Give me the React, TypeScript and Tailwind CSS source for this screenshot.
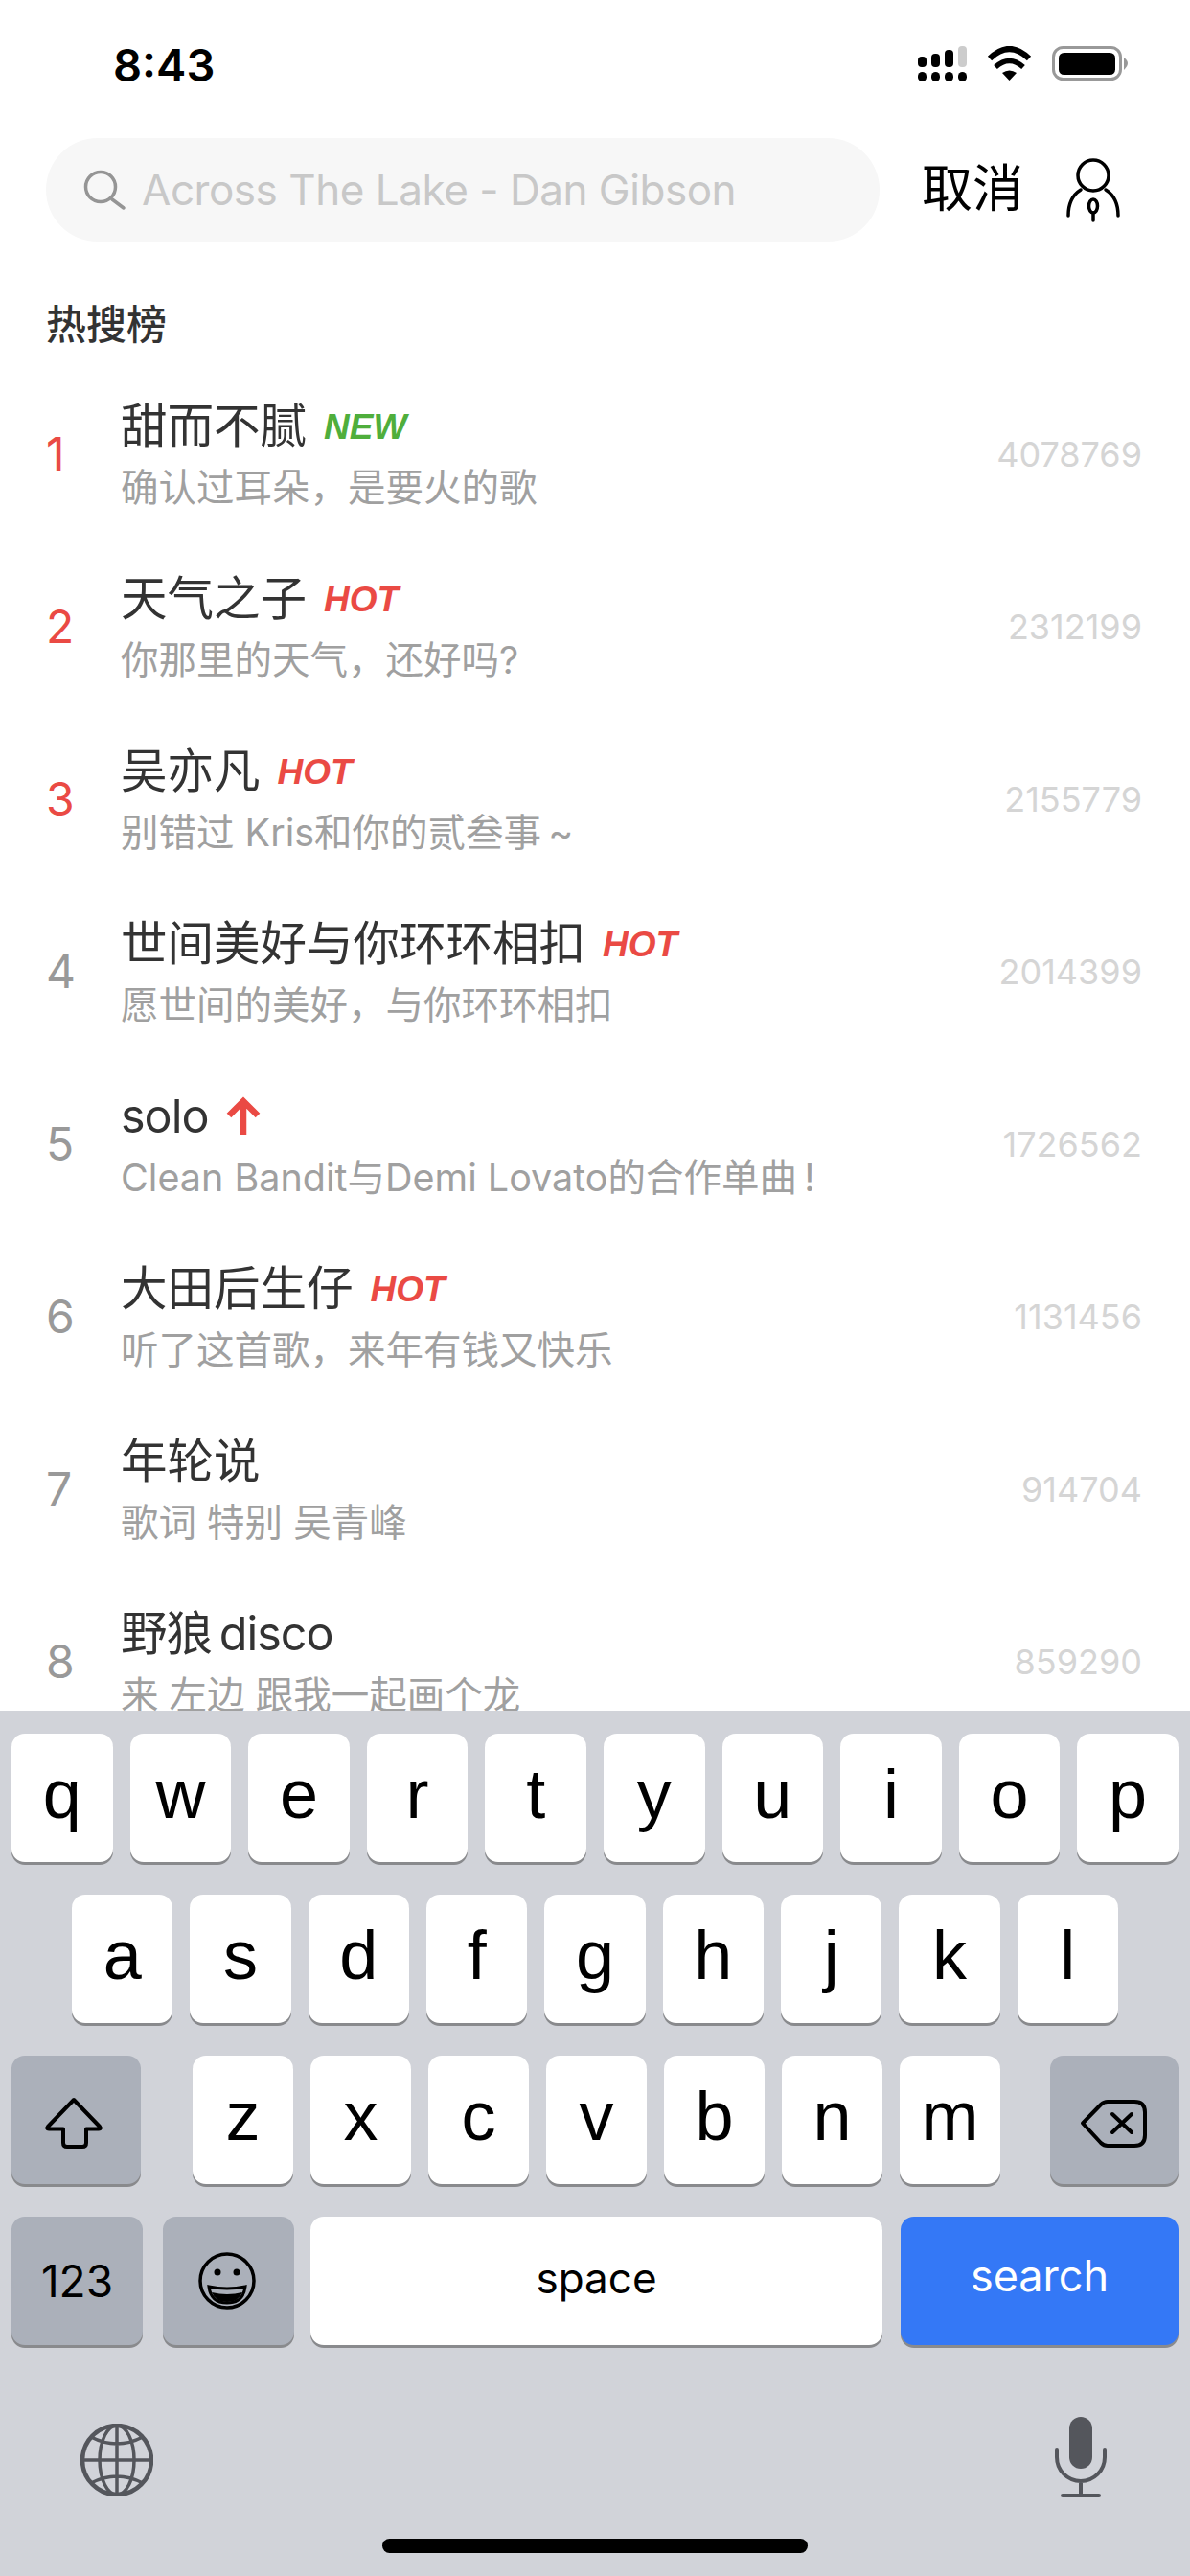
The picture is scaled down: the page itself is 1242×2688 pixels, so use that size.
import { ReactNode } from "react";

type Tag = "NEW" | "HOT" | "UP";

const rows: { name: string; tag?: Tag; desc: string; count: string; latin?: boolean }[] = [
	{ name: "甜而不腻", tag: "NEW", desc: "确认过耳朵，是要火的歌", count: "4078769" },
	{ name: "天气之子", tag: "HOT", desc: "你那里的天气，还好吗?", count: "2312199" },
	{ name: "吴亦凡", tag: "HOT", desc: "别错过 Kris和你的贰叁事\u2009~", count: "2155779" },
	{ name: "世间美好与你环环相扣", tag: "HOT", desc: "愿世间的美好，与你环环相扣", count: "2014399" },
	{ name: "solo", tag: "UP", desc: "Clean Bandit与Demi Lovato的合作单曲\u2009!", count: "1726562", latin: true },
	{ name: "大田后生仔", tag: "HOT", desc: "听了这首歌，来年有钱又快乐", count: "1131456" },
	{ name: "年轮说", desc: "歌词 特别 吴青峰", count: "914704" },
	{ name: "野狼\u2009disco", desc: "来 左边 跟我一起画个龙", count: "859290", latin: true },
];

function StatusIcons() {
	return (
		<div className="flex items-start">
			<svg width="52" height="38" viewBox="0 0 52 38">
				<rect x="0" y="11" width="9" height="11" rx="4" fill="#000" />
				<rect x="14" y="8" width="9" height="14" rx="4" fill="#000" />
				<rect x="28" y="4" width="9" height="18" rx="4" fill="#000" />
				<rect x="42" y="0" width="9" height="22" rx="4" fill="#cccccc" />
				<rect x="0" y="27" width="9" height="10" rx="4.5" fill="#000" />
				<rect x="14" y="27" width="9" height="10" rx="4.5" fill="#000" />
				<rect x="28" y="27" width="9" height="10" rx="4.5" fill="#000" />
				<rect x="42" y="27" width="9" height="10" rx="4.5" fill="#000" />
			</svg>
			<svg className="ml-[20px]" width="48" height="38" viewBox="0 0 48 38" fill="none">
				<path d="M3 13Q23.5 -7 44 13" stroke="#000" strokeWidth="6" />
				<path d="M9 22Q23.5 9 38 22" stroke="#000" strokeWidth="5.5" />
				<path d="M23.5 36L16 28Q23.5 23 31 28Z" fill="#000" />
			</svg>
			<svg className="ml-[20px]" width="80" height="38" viewBox="0 0 80 38" fill="none">
				<rect x="1.5" y="1.5" width="70" height="33" rx="10" stroke="#999" strokeWidth="3" />
				<rect x="7" y="7" width="59" height="23" rx="5.5" fill="#000" />
				<path d="M75 12Q79 15 79 18Q79 21 75 25Z" fill="#999" />
			</svg>
		</div>
	);
}

function Rank({ n }: { n: number }) {
	return (
		<div className={`w-[78px] shrink-0 text-[48px] leading-none ${n <= 3 ? "text-[#ea4a44]" : "text-[#999999]"}`}>
			{n}
		</div>
	);
}

function RowTag({ tag }: { tag: Tag }) {
	if (tag === "UP") {
		return (
			<svg width="36" height="42" viewBox="0 0 36 42" fill="none">
				<path d="M18 40V6M3 20L18 5L33 20" stroke="#ea4a44" strokeWidth="6.5" />
			</svg>
		);
	}
	return (
		<span
			className={`font-['Liberation_Sans'] text-[37px] font-bold italic leading-none ${tag === "NEW" ? "text-[#4fae3c]" : "text-[#ea4a44]"}`}
		>
			{tag}
		</span>
	);
}

function Key({ children, className }: { children: ReactNode; className?: string }) {
	return (
		<div
			className={`flex h-[134px] items-center justify-center rounded-[14px] text-black shadow-[0_3px_0_#898a8d] ${className ?? "flex-1 bg-white pb-[9px] font-['Liberation_Sans'] text-[72px]"}`}
		>
			{children}
		</div>
	);
}

function Keyboard() {
	return (
		<div className="flex h-[903px] shrink-0 flex-col bg-[#d1d3d9] pt-[24px]">
			<div className="flex gap-[18px] px-[12px]">
				{"qwertyuiop".split("").map((k) => (
					<Key key={k}>{k}</Key>
				))}
			</div>
			<div className="mt-[34px] flex gap-[18px] px-[75px]">
				{"asdfghjkl".split("").map((k) => (
					<Key key={k}>{k}</Key>
				))}
			</div>
			<div className="mt-[34px] flex items-start px-[12px]">
				<Key className="w-[135px] bg-[#abb0ba]">
					<svg className="ml-[3px]" width="90" height="80" viewBox="0 0 90 80" fill="none">
						<path
							d="M41 19L14 47Q12 49.5 15 49.5H30V64Q30 68 34 68H50Q54 68 54 64V49.5H67Q70 49.5 68 47Z"
							stroke="#000"
							strokeWidth="4"
							strokeLinejoin="round"
						/>
					</svg>
				</Key>
				<div className="ml-[54px] flex w-[843px] gap-[18px]">
					{"zxcvbnm".split("").map((k) => (
						<Key key={k}>{k}</Key>
					))}
				</div>
				<Key className="ml-[52px] w-[134px] bg-[#abb0ba]">
					<svg className="-ml-[6px]" width="100" height="80" viewBox="0 0 100 80" fill="none">
						<path
							d="M20 43.5L39 24Q42 21 46 21H74Q85 21 85 32V56Q85 67 74 67H46Q42 67 39 64Z"
							stroke="#000"
							strokeWidth="4"
							strokeLinejoin="round"
						/>
						<path d="M51 34L71 53M71 34L51 53" stroke="#000" strokeWidth="4" strokeLinecap="round" />
					</svg>
				</Key>
			</div>
			<div className="mt-[34px] flex items-start px-[12px]">
				<Key className="w-[137px] bg-[#abb0ba] text-[46px]">123</Key>
				<Key className="ml-[21px] w-[137px] bg-[#abb0ba]">
					<svg width="100" height="100" viewBox="0 0 100 100" fill="none">
						<circle cx="48" cy="50" r="28" stroke="#000" strokeWidth="3.5" />
						<circle cx="38" cy="41" r="3.5" fill="#000" />
						<circle cx="58" cy="41" r="3.5" fill="#000" />
						<path d="M29 56Q48 60 67 56Q65 73 48 73Q31 73 29 56Z" stroke="#000" strokeWidth="3" />
						<path d="M32 62Q48 66 64 62Q60 72 48 72Q36 72 32 62Z" fill="#000" />
					</svg>
				</Key>
				<Key className="ml-[17px] w-[597px] bg-white pb-[6px] text-[44px]">space</Key>
				<Key className="ml-[19px] w-[290px] bg-[#3478f6] pb-[10px] text-[45px] !text-white">search</Key>
			</div>
			<div className="mt-[73px] flex items-start justify-between px-[84px]">
				<svg className="mt-[9px]" width="76" height="76" viewBox="0 0 76 76" fill="none" stroke="#54565c" strokeWidth="3.5">
					<circle cx="38" cy="38" r="36" strokeWidth="4.5" />
					<ellipse cx="38" cy="38" rx="18" ry="36" />
					<path d="M38 2V74M2 38H74M11 14Q38 28 65 14M11 62Q38 48 65 62" />
				</svg>
				<svg width="60" height="90" viewBox="0 0 60 90" fill="none">
					<rect x="18" y="2" width="24" height="54" rx="12" fill="#54565c" />
					<path d="M5 36V44A25 25 0 0 0 55 44V36M30 69V84M11 84H49" stroke="#54565c" strokeWidth="4" strokeLinecap="round" />
				</svg>
			</div>
			<div className="mt-[39px] h-[15px] w-[444px] self-center rounded-full bg-black" />
		</div>
	);
}

export default function App() {
	return (
		<div
			lang="zh-CN"
			className="flex h-[2688px] w-[1242px] flex-col overflow-hidden bg-white font-['Inter','Noto_Sans_CJK_SC',sans-serif]"
		>
			<div className="flex h-[144px] shrink-0 items-start justify-between pl-[118px] pr-[64px] pt-[48px]">
				<span className="text-[47px] font-semibold leading-[40px] text-black">8:43</span>
				<StatusIcons />
			</div>

			<div className="flex h-[108px] shrink-0 items-center pl-[48px]">
				<div className="flex h-[108px] w-[870px] items-center rounded-full bg-[#f7f7f7] pl-[22px]">
					<svg className="-mt-[12px]" width="64" height="64" viewBox="0 0 64 64" fill="none">
						<circle cx="35" cy="35" r="15.5" stroke="#959595" strokeWidth="3.5" />
						<path d="M47 48L59 57" stroke="#959595" strokeWidth="3.5" strokeLinecap="round" />
					</svg>
					<span className="ml-[14px] text-[44px] tracking-[-0.47px] text-[#c8c8c8]">Across The Lake - Dan Gibson</span>
				</div>
				<span className="ml-[44px] text-[53px] text-black">取消</span>
				<svg className="-mt-[6px] ml-[23px]" width="100" height="90" viewBox="0 0 100 90" fill="none" stroke="#000" strokeWidth="3.5">
					<circle cx="50" cy="33" r="16" />
					<path d="M24 75C24 62 29 53 37 48M76 75C76 62 71 53 63 48M50 72V80" strokeLinecap="round" />
					<ellipse cx="50" cy="65" rx="4.5" ry="7" />
				</svg>
			</div>

			<div className="mt-[60px] h-[54px] shrink-0 pl-[48px] text-[42px] font-medium leading-[54px] text-[#333333]">热搜榜</div>

			<div className="mt-[18px] min-h-0 flex-1 overflow-hidden">
				{rows.map((row, i) => (
					<div key={row.name} className="flex h-[180px] items-center pl-[48px] pr-[50px]">
						<Rank n={i + 1} />
						<div className="flex min-w-0 flex-1 flex-col gap-[10px]">
							<div className="flex h-[60px] items-center gap-[18px] text-[48.5px] leading-[60px] text-[#333333]">
								<span className={row.latin ? "tracking-[-1px]" : undefined}>{row.name}</span>
								{row.tag && <RowTag tag={row.tag} />}
							</div>
							<div className="h-[48px] text-[39.5px] leading-[48px] text-[#a0a0a0]">{row.desc}</div>
						</div>
						<div className="text-[36px] leading-none text-[#d5d5d5]">{row.count}</div>
					</div>
				))}
			</div>

			<Keyboard />
		</div>
	);
}
